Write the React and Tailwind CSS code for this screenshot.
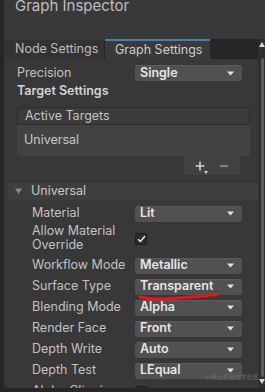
const Arrow = () => (
  <svg width="7" height="5" viewBox="0 0 7 5" className="shrink-0">
    <path d="M0 0.5 L7 0.5 L3.5 4.5 Z" fill="#e4e4e4" />
  </svg>
)

const Dropdown = ({ value }) => (
  <div className="w-[107px] h-[16px] bg-[#515151] rounded-[3px] flex items-center justify-between pl-[5px] pr-[8px] shadow-[inset_0_1px_0_#5c5c5c]">
    <span className="text-[12.5px] leading-none font-semibold text-[#e6e6e6]">{value}</span>
    <Arrow />
  </div>
)

const Checkbox = ({ checked }) => (
  <div className="w-[12px] h-[12px] rounded-[2px] bg-[#2b2b2b] border border-[#1e1e1e] flex items-center justify-center">
    {checked && (
      <svg width="9" height="8" viewBox="0 0 9 8">
        <path d="M1 4.2 L3.4 6.4 L8 1" fill="none" stroke="#e8e8e8" strokeWidth="1.5" />
      </svg>
    )}
  </div>
)

const Row = ({ label, children, className = '' }) => (
  <div className={`flex items-center h-[17px] pl-[24px] ${className}`}>
    <div className="w-[103px] shrink-0 text-[12.5px] text-[#c2c2c2] leading-none">{label}</div>
    {children}
  </div>
)

export default function App() {
  return (
    <div className="relative w-[265px] h-[392px] overflow-hidden bg-[#262626] font-['Inter',sans-serif]">
      <div className="ml-[4px] h-[388px] bg-[#383838] rounded-bl-[4px] overflow-hidden flex flex-col">
        <div className="h-[39px] shrink-0 bg-[#393939] pl-[11px]">
          <div className="-mt-[2px] text-[15px] leading-[15px] text-[#bebebe]">Graph Inspector</div>
        </div>

        <div className="h-[20px] shrink-0 bg-[#252525] flex">
          <div className="w-[100px] bg-[#333333] pl-[11px] flex items-center text-[12.5px] text-[#bdbdbd]">Node Settings</div>
          <div className="w-[105px] ml-[1px] bg-[#3a3a3a] border-t-2 border-[#4a7cb5] pl-[10px] flex items-center text-[12.5px] text-[#cdcdcd]">Graph Settings</div>
        </div>

        <div className="pl-[13px] pt-[5px] pr-[8px]">
          <div className="flex items-center h-[18px]">
            <div className="w-[118px] shrink-0 text-[12.5px] text-[#c2c2c2]">Precision</div>
            <Dropdown value="Single" />
          </div>
          <div className="h-[18px] flex items-center text-[12.5px] font-semibold text-[#d4d4d4]">Target Settings</div>

          <div className="mt-[7px] w-[233px]">
            <div className="h-[18px] bg-[#3b3b3b] border border-[#2d2d2d] rounded-t-[3px] pl-[7px] flex items-center text-[12.5px] text-[#c4c4c4]">Active Targets</div>
            <div className="h-[31px] bg-[#424242] rounded-b-[3px] rounded-tr-none pl-[7px] flex items-center text-[12.5px] text-[#c8c8c8]">Universal</div>
            <div className="ml-[167px] w-[56px] h-[19px] bg-[#424242] rounded-b-[3px] flex items-center justify-center gap-[14px] text-[#cfcfcf]">
              <div className="relative w-[10px] h-[10px]">
                <svg width="10" height="10" viewBox="0 0 10 10">
                  <path d="M5 0.5 V9.5 M0.5 5 H9.5" stroke="#d6d6d6" strokeWidth="1.6" />
                </svg>
                <div className="absolute -right-[3px] bottom-[-3px] w-0 h-0 border-l-[2px] border-r-[2px] border-t-[3px] border-l-transparent border-r-transparent border-t-[#d6d6d6]" />
              </div>
              <svg width="10" height="10" viewBox="0 0 10 10">
                <path d="M1 5 H9" stroke="#9a9a9a" strokeWidth="1.6" />
              </svg>
            </div>
          </div>
        </div>

        <div className="ml-[4px] mr-[2px] mt-[6px] flex flex-col">
          <div className="h-[19px] bg-[#3e3e3e] border-t border-[#2f2f2f] flex items-center pl-[7px] gap-[9px]">
            <svg width="7" height="6" viewBox="0 0 7 6">
              <path d="M0 0.5 L7 0.5 L3.5 6 Z" fill="#8a8a8a" />
            </svg>
            <span className="text-[12.5px] text-[#c8c8c8]">Universal</span>
          </div>

          <Row label="Material" className="mt-[5px]"><Dropdown value="Lit" /></Row>
          <div className="flex pl-[24px] mt-[2px] h-[29px]">
            <div className="w-[103px] shrink-0 text-[12.5px] leading-[14px] text-[#c2c2c2]">Allow Material<br />Override</div>
            <div className="pt-[9px]"><Checkbox checked /></div>
          </div>
          <Row label="Workflow Mode" className="mt-[4px]"><Dropdown value="Metallic" /></Row>
          <Row label="Surface Type" className="mt-[4px]"><Dropdown value="Transparent" /></Row>
          <Row label="Blending Mode" className="mt-[4px]"><Dropdown value="Alpha" /></Row>
          <Row label="Render Face" className="mt-[4px]"><Dropdown value="Front" /></Row>
          <Row label="Depth Write" className="mt-[4px]"><Dropdown value="Auto" /></Row>
          <Row label="Depth Test" className="mt-[4px]"><Dropdown value="LEqual" /></Row>
          <Row label="Alpha Clipping" className="mt-[4px]"><Checkbox /></Row>
        </div>
      </div>

      <div className="absolute right-0 top-[39px] w-[7px] h-[349px] bg-[#2f2f2f] flex flex-col items-end">
        <div className="mt-[3px] w-0 h-0 border-l-[3px] border-r-[3px] border-b-[5px] border-l-transparent border-r-transparent border-b-[#d8d8d8]" />
        <div className="mt-[11px] mr-[1px] w-[3px] flex-1 bg-[#5c5c5c] rounded-[2px]" />
        <div className="mt-[2px] mb-[4px] w-0 h-0 border-l-[3px] border-r-[3px] border-t-[5px] border-l-transparent border-r-transparent border-t-[#d8d8d8]" />
      </div>

      <div className="absolute left-[205px] top-[374px] text-[6px] leading-none text-[#6a6a6a] font-['Noto_Sans_CJK_SC',sans-serif]">@稀土掘金技术社区</div>

      <svg className="absolute left-0 top-0 pointer-events-none" width="265" height="392">
        <path d="M140 297 Q 150 300 172 298.5 T 217 294.5" fill="none" stroke="#e5151f" strokeWidth="3" strokeLinecap="round" />
      </svg>
    </div>
  )
}
